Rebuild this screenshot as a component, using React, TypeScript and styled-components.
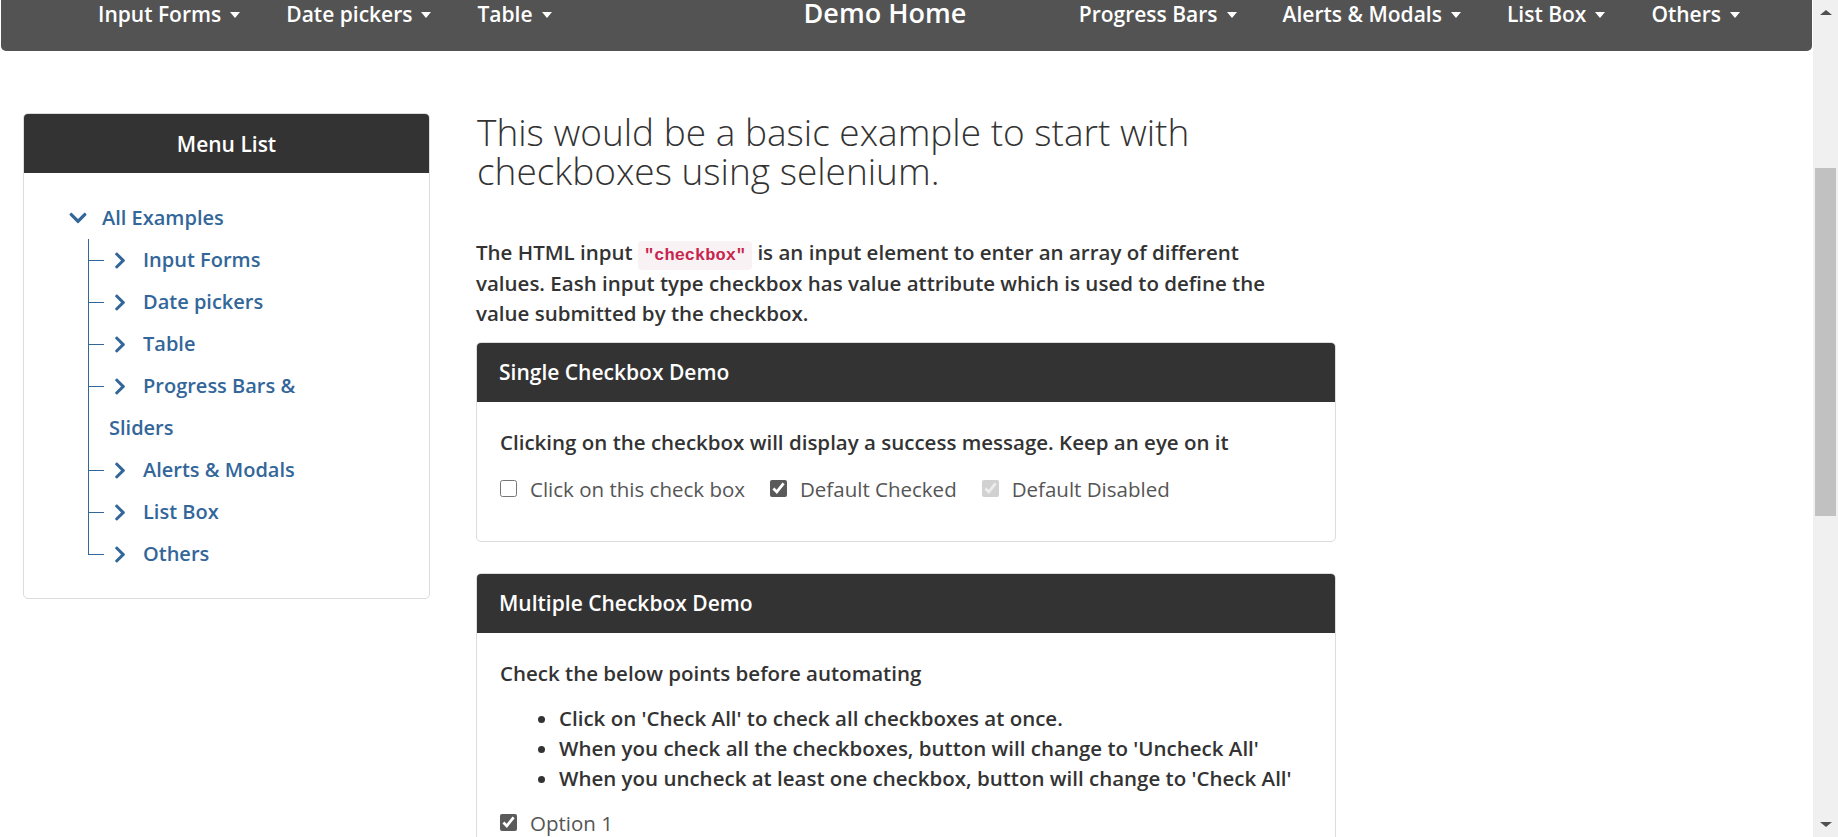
import React from "react";
import styled, { createGlobalStyle } from "styled-components";
import { FaChevronRight, FaChevronDown } from "react-icons/fa";

const GlobalStyle = createGlobalStyle`
  html, body { margin: 0; padding: 0; height: 100%; overflow: hidden; background: #fff; }
  body { font-family: "Open Sans", Lato, sans-serif; color: #333; }
  * { box-sizing: border-box; }
`;

const Page = styled.div`
  display: flex;
  width: 100%;
  height: 837px;
  overflow: hidden;
`;

const Viewport = styled.div`
  flex: 1;
  min-width: 0;
  display: flex;
  flex-direction: column;
`;

const NavBar = styled.nav`
  flex: none;
  height: 51px;
  margin: 0 1px;
  background: #535353;
  border-radius: 0 0 5px 5px;
  display: flex;
  align-items: flex-start;
  padding: 0 49px 0 74px;
`;

const NavGroup = styled.ul<{ $push?: boolean }>`
  list-style: none;
  margin: 0;
  margin-left: ${(p) => (p.$push ? "auto" : "0")};
  padding: 0;
  display: flex;
`;

const NavItem = styled.li`
  padding: 0 23px;
  color: #fff;
  font-weight: 600;
  font-size: 21px;
  line-height: 28px;
  display: flex;
  align-items: center;
  gap: 9px;
  white-space: nowrap;
`;

const Caret = styled.span`
  width: 0;
  height: 0;
  border-top: 6px solid #fff;
  border-left: 5px solid transparent;
  border-right: 5px solid transparent;
  margin-top: 2px;
`;

const Brand = styled.div`
  margin-left: 229px;
  color: #fff;
  font-weight: 600;
  font-size: 27px;
  line-height: 28px;
  margin-top: -1px;
  white-space: nowrap;
`;

const Main = styled.div`
  flex: none;
  display: flex;
  align-items: flex-start;
  padding: 62px 0 0 23px;
  gap: 46px;
`;

const Card = styled.section<{ $width: number }>`
  width: ${(p) => p.$width}px;
  flex: none;
  border: 1px solid #dcdcdc;
  border-radius: 5px;
  overflow: hidden;
  background: #fff;
  & + & {
    margin-top: 31px;
  }
`;

const CardHeader = styled.div<{ $center?: boolean }>`
  height: 59px;
  background: #333;
  color: #fff;
  font-weight: 600;
  font-size: 21px;
  display: flex;
  align-items: center;
  justify-content: ${(p) => (p.$center ? "center" : "flex-start")};
  padding: 0 22px;
`;

const TreeBody = styled.div`
  padding: 24px 0 23px 45px;
`;

const TreeList = styled.ul`
  list-style: none;
  margin: 0;
  padding: 0;
  font-size: 20px;
  font-weight: 600;
  color: #336699;
  line-height: 42px;
`;

const RootItem = styled.li``;

const RowLabel = styled.div`
  display: flex;
  align-items: center;
  height: 42px;
`;

const DownIcon = styled(FaChevronDown)`
  width: 18px;
  height: 20px;
  margin-right: 15px;
  flex: none;
`;

const RightIcon = styled(FaChevronRight)`
  width: 12px;
  height: 19px;
  margin: 0 17px 0 5px;
  vertical-align: -3px;
`;

const ChildList = styled.ul`
  list-style: none;
  margin: 0 0 0 19px;
  padding: 0;
  width: 235px;
`;

const ChildItem = styled.li`
  position: relative;
  padding-left: 21px;
  &::before {
    content: "";
    position: absolute;
    left: 0;
    top: 0;
    width: 15px;
    height: 21px;
    border-left: 1px solid #336699;
    border-bottom: 1px solid #336699;
  }
  &::after {
    content: "";
    position: absolute;
    left: 0;
    top: 21px;
    bottom: 0;
    border-left: 1px solid #336699;
  }
  &:last-child::after {
    display: none;
  }
`;

const Content = styled.div`
  width: 860px;
  flex: none;
`;

const Heading = styled.h1`
  margin: -1px 0 0 1px;
  font-size: 37px;
  line-height: 39px;
  font-weight: 300;
  color: #333;
  width: 760px;
`;

const Lead = styled.p`
  margin: 47px 0 13px 0;
  font-size: 20.5px;
  line-height: 30.5px;
  font-weight: 600;
  color: #333;
  max-width: 830px;
`;

const Code = styled.code`
  font-family: "Liberation Mono", monospace;
  font-size: 17px;
  line-height: 1;
  color: #c7254e;
  background: #f9f2f4;
  border-radius: 4px;
  padding: 5px 6px;
`;

const CardBody = styled.div`
  padding: 25px 23px 37px;
`;

const BodyText = styled.p`
  margin: 0;
  font-size: 20.5px;
  line-height: 30px;
  font-weight: 600;
  color: #333;
`;

const CheckRow = styled.div`
  margin-top: 17px;
  display: flex;
  align-items: center;
  gap: 25px;
`;

const CheckLabel = styled.label`
  display: inline-flex;
  align-items: center;
  gap: 13px;
  font-size: 20.5px;
  line-height: 30px;
  font-weight: 400;
  color: #555;
`;

const Box = styled.input`
  width: 17px;
  height: 17px;
  margin: 0;
  accent-color: #5a5a5a;
`;

const Points = styled.ul`
  margin: 15px 0 15px 0;
  padding-left: 59px;
  font-size: 20.5px;
  line-height: 30px;
  font-weight: 600;
  color: #333;
`;

const ScrollBar = styled.div`
  width: 25px;
  flex: none;
  background: #f0f0f0;
  display: flex;
  flex-direction: column;
  align-items: center;
  height: 837px;
`;

const ArrowUp = styled.span`
  margin-top: 10px;
  width: 0;
  height: 0;
  border-bottom: 5px solid #505050;
  border-left: 6px solid transparent;
  border-right: 6px solid transparent;
`;

const ArrowDown = styled.span`
  margin-top: auto;
  margin-bottom: 10px;
  width: 0;
  height: 0;
  border-top: 5px solid #505050;
  border-left: 6px solid transparent;
  border-right: 6px solid transparent;
`;

const Thumb = styled.div`
  margin-top: 153px;
  width: 21px;
  height: 348px;
  background: #c1c1c1;
`;

const leftNav = ["Input Forms", "Date pickers", "Table"];
const rightNav = ["Progress Bars", "Alerts & Modals", "List Box", "Others"];
const treeItems = [
  "Input Forms",
  "Date pickers",
  "Table",
  "Progress Bars & Sliders",
  "Alerts & Modals",
  "List Box",
  "Others",
];

export default function App() {
  return (
    <>
      <GlobalStyle />
      <Page>
        <Viewport>
          <NavBar>
            <NavGroup>
              {leftNav.map((n) => (
                <NavItem key={n}>
                  {n}
                  <Caret />
                </NavItem>
              ))}
            </NavGroup>
            <Brand>Demo Home</Brand>
            <NavGroup $push>
              {rightNav.map((n) => (
                <NavItem key={n}>
                  {n}
                  <Caret />
                </NavItem>
              ))}
            </NavGroup>
          </NavBar>
          <Main>
            <Card $width={407}>
              <CardHeader $center>Menu List</CardHeader>
              <TreeBody>
                <TreeList>
                  <RootItem>
                    <RowLabel>
                      <DownIcon />
                      All Examples
                    </RowLabel>
                    <ChildList>
                      {treeItems.map((t) => (
                        <ChildItem key={t}>
                          <RightIcon />
                          {t}
                        </ChildItem>
                      ))}
                    </ChildList>
                  </RootItem>
                </TreeList>
              </TreeBody>
            </Card>
            <Content>
              <Heading>
                This would be a basic example to start with checkboxes using
                selenium.
              </Heading>
              <Lead>
                The HTML input <Code>"checkbox"</Code> is an input element to
                enter an array of different values. Eash input type checkbox has
                value attribute which is used to define the value submitted by
                the checkbox.
              </Lead>
              <Card $width={860}>
                <CardHeader>Single Checkbox Demo</CardHeader>
                <CardBody>
                  <BodyText>
                    Clicking on the checkbox will display a success message.
                    Keep an eye on it
                  </BodyText>
                  <CheckRow>
                    <CheckLabel>
                      <Box type="checkbox" />
                      Click on this check box
                    </CheckLabel>
                    <CheckLabel>
                      <Box type="checkbox" defaultChecked />
                      Default Checked
                    </CheckLabel>
                    <CheckLabel>
                      <Box type="checkbox" defaultChecked disabled />
                      Default Disabled
                    </CheckLabel>
                  </CheckRow>
                </CardBody>
              </Card>
              <Card $width={860}>
                <CardHeader>Multiple Checkbox Demo</CardHeader>
                <CardBody>
                  <BodyText>Check the below points before automating</BodyText>
                  <Points>
                    <li>Click on 'Check All' to check all checkboxes at once.</li>
                    <li>
                      When you check all the checkboxes, button will change to
                      'Uncheck All'
                    </li>
                    <li>
                      When you uncheck at least one checkbox, button will change
                      to 'Check All'
                    </li>
                  </Points>
                  <CheckLabel>
                    <Box type="checkbox" defaultChecked />
                    Option 1
                  </CheckLabel>
                </CardBody>
              </Card>
            </Content>
          </Main>
        </Viewport>
        <ScrollBar>
          <ArrowUp />
          <Thumb />
          <ArrowDown />
        </ScrollBar>
      </Page>
    </>
  );
}
